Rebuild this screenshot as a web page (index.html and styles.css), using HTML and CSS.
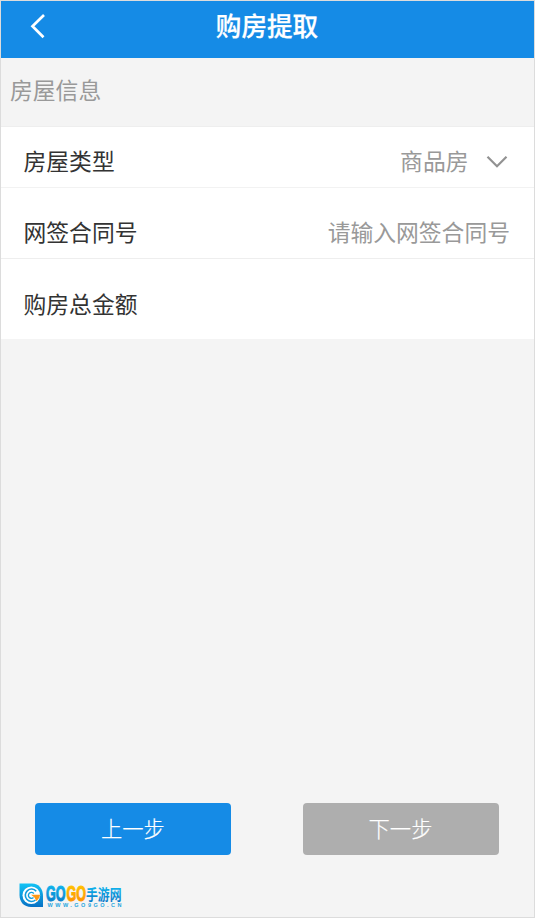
FILE: index.html
```html
<!DOCTYPE html>
<html lang="zh-CN">
<head>
<meta charset="utf-8">
<title>购房提取</title>
<link rel="stylesheet" href="styles.css">
</head>
<body>
<div class="screen">
  <header class="header">
    <svg class="back" width="16" height="26" viewBox="0 0 16 26"><path d="M14 2 2.500 13.200 13.500 24.200" fill="none" stroke="#fff" stroke-width="2.700"/></svg>
    <h1 class="title">购房提取</h1>
  </header>
  <h2 class="section">房屋信息</h2>
  <main class="form">
    <div class="row row-type">
      <span>房屋类型</span>
      <span class="value">商品房</span>
      <svg class="chevron" width="22" height="14" viewBox="0 0 22 14"><path d="m1.500 1.800 9.500 9.400 9.500-9.400" fill="none" stroke="#929292" stroke-width="2.200"/></svg>
    </div>
    <div class="row row-contract">
      <span>网签合同号</span>
      <span class="value">请输入网签合同号</span>
    </div>
    <div class="row row-amount"><span>购房总金额</span></div>
  </main>
  <div class="actions">
    <button class="button primary">上一步</button>
    <button class="button disabled" disabled>下一步</button>
  </div>
  <footer class="brand">
    <svg width="106" height="27" viewBox="0 0 106 27">
      <defs>
        <linearGradient id="blue" x1="0" y1="0" x2="0" y2="1"><stop offset="0" stop-color="#12c3f5"/><stop offset="1" stop-color="#0871c4"/></linearGradient>
        <linearGradient id="orange" x1="0" y1="0" x2="0" y2="1"><stop offset="0" stop-color="#ffd000"/><stop offset="1" stop-color="#ff8500"/></linearGradient>
      </defs>
      <path d="M.5.5H13C20 .5 24 6 24 13V24H12C5 24 .5 19 .5 12Z" fill="url(#blue)"/>
      <circle cx="12.300" cy="12.300" r="8.800" fill="#fff"/>
      <path d="M17.200 8.200A6.200 6.200 0 1 0 16.500 17" fill="none" stroke="#109cdc" stroke-width="1.600"/>
      <path d="M14.800 10.500A3 3 0 1 0 14.500 14.500" fill="none" stroke="#109cdc" stroke-width="1.400"/>
      <path d="M12 11.800H21.200Q20.500 16 17.500 18.200L15.500 14.500Z" fill="#ff9817"/>
      <g class="brand-latin">
        <text x="27" y="18" textLength="19.500" lengthAdjust="spacingAndGlyphs" fill="url(#blue)" stroke="url(#blue)">GO</text>
        <text x="47.500" y="18" textLength="19.500" lengthAdjust="spacingAndGlyphs" fill="url(#orange)" stroke="url(#orange)">GO</text>
      </g>
      <text class="brand-cn" x="67" y="17" textLength="35.500" lengthAdjust="spacingAndGlyphs" fill="url(#blue)">手游网</text>
      <text class="brand-url" x="28.500" y="24.300" textLength="74" fill="#25a5dd">WWW.GO9GO.CN</text>
    </svg>
  </footer>
</div>
</body>
</html>
```
FILE: styles.css
```css
* {
  box-sizing: border-box;
}

body {
  margin: 0;
  font-family: "Noto Sans CJK SC", sans-serif;
}

.screen {
  display: flex;
  flex-direction: column;
  height: 918px;
  border: 1px solid #dcdcdc;
  background: #f4f4f4;
}

.header {
  display: grid;
  grid-template-columns: 60px 1fr 60px;
  align-items: center;
  height: 57px;
  padding-bottom: 7px;
  background: #158be6;
  color: #fff;
}

.back {
  margin-left: 28.5px;
}

.title {
  margin: 0;
  padding: 0 1px 2px 0;
  font-size: 25.6px;
  font-weight: 500;
  line-height: 38px;
  text-align: center;
  -webkit-text-stroke: .25px #fff;
}

.section {
  height: 69px;
  margin: 0;
  padding-left: 9px;
  border-bottom: 1px solid #eee;
  color: #999;
  font-size: 22.8px;
  font-weight: 400;
  line-height: 64px;
}

.form {
  background: #fff;
  color: #333;
  font-size: 22.8px;
}

.row {
  display: flex;
  align-items: center;
  padding: 0 24px 0 22.5px;
  line-height: 34px;
}

.row-type {
  height: 61px;
  padding-top: 8px;
  padding-right: 26px;
  border-bottom: 1px solid #f2f2f2;
}

.row-contract {
  height: 71px;
  padding-top: 18px;
  border-bottom: 1px solid #eee;
}

.row-amount {
  height: 80px;
  padding-top: 9px;
}

.value {
  margin-left: auto;
  color: #999;
}

.chevron {
  margin: 2px 0 0 17.5px;
}

.actions {
  display: flex;
  justify-content: space-between;
  margin-top: auto;
  padding: 0 35px 0 34.4px;
}

.button {
  width: 196px;
  height: 52px;
  padding: 0 1px 2px 0;
  border: 0;
  border-radius: 4px;
  color: #fff;
  font: 300 21.3px/32px "Noto Sans CJK SC", sans-serif;
  -webkit-text-stroke: .2px #fff;
}

.primary {
  background: #158be6;
}

.disabled {
  background: #aeaeae;
}

.brand {
  height: 62px;
  padding: 28px 0 0 18px;
}

.brand svg {
  display: block;
}

.brand-latin {
  font: bold 22px "Liberation Sans", sans-serif;
  stroke-width: 1.1px;
}

.brand-cn {
  font: 700 15px "Noto Sans CJK SC", sans-serif;
}

.brand-url {
  font: bold 5.5px "Liberation Sans", sans-serif;
}
```
